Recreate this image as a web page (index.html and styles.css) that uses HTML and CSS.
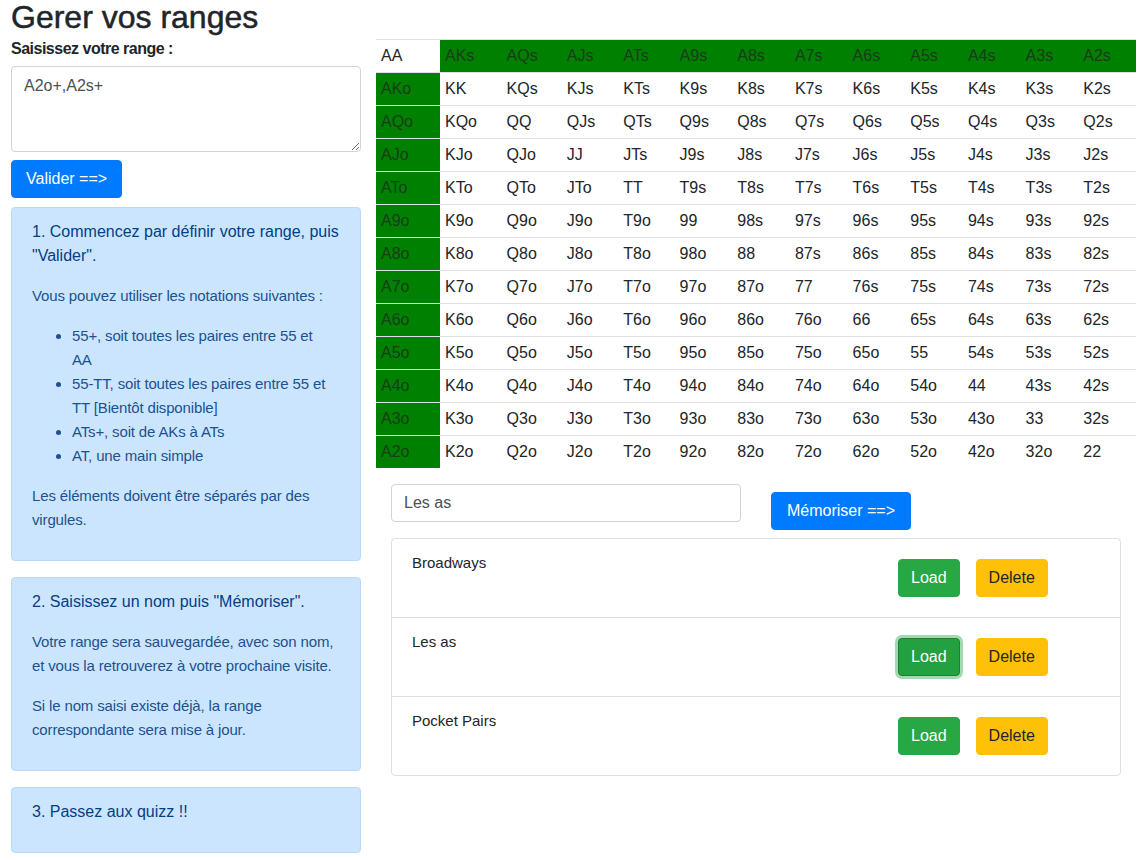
FILE: index.html
```html
<!DOCTYPE html>
<html lang="fr">
<head>
<meta charset="utf-8">
<title>Gerer vos ranges</title>
<link rel="stylesheet" href="styles.css">
</head>
<body>
<div class="page">
  <div class="left">
    <h2 class="title">Gerer vos ranges</h2>
    <label class="label" for="range">Saisissez votre range :</label>
    <textarea id="range" class="form-control" rows="3">A2o+,A2s+</textarea>
    <button class="btn btn-primary btn-valider">Valider ==&gt;</button>

    <div class="alert">
      <p class="strong">1. Commencez par définir votre range, puis "Valider".</p>
      <p>Vous pouvez utiliser les notations suivantes :</p>
      <ul>
        <li>55+, soit toutes les paires entre 55 et AA</li>
        <li>55-TT, soit toutes les paires entre 55 et TT [Bientôt disponible]</li>
        <li>ATs+, soit de AKs à ATs</li>
        <li>AT, une main simple</li>
      </ul>
      <p>Les éléments doivent être séparés par des virgules.</p>
    </div>
    <div class="alert">
      <p class="strong">2. Saisissez un nom puis "Mémoriser".</p>
      <p>Votre range sera sauvegardée, avec son nom, et vous la retrouverez à votre prochaine visite.</p>
      <p>Si le nom saisi existe déjà, la range correspondante sera mise à jour.</p>
    </div>
    <div class="alert">
      <p class="strong">3. Passez aux quizz !!</p>
    </div>
  </div>

  <div class="right">
    <table class="grid">
      <tbody>
        <tr><td>AA</td><td class="on">AKs</td><td class="on">AQs</td><td class="on">AJs</td><td class="on">ATs</td><td class="on">A9s</td><td class="on">A8s</td><td class="on">A7s</td><td class="on">A6s</td><td class="on">A5s</td><td class="on">A4s</td><td class="on">A3s</td><td class="on">A2s</td></tr>
        <tr><td class="on">AKo</td><td>KK</td><td>KQs</td><td>KJs</td><td>KTs</td><td>K9s</td><td>K8s</td><td>K7s</td><td>K6s</td><td>K5s</td><td>K4s</td><td>K3s</td><td>K2s</td></tr>
        <tr><td class="on">AQo</td><td>KQo</td><td>QQ</td><td>QJs</td><td>QTs</td><td>Q9s</td><td>Q8s</td><td>Q7s</td><td>Q6s</td><td>Q5s</td><td>Q4s</td><td>Q3s</td><td>Q2s</td></tr>
        <tr><td class="on">AJo</td><td>KJo</td><td>QJo</td><td>JJ</td><td>JTs</td><td>J9s</td><td>J8s</td><td>J7s</td><td>J6s</td><td>J5s</td><td>J4s</td><td>J3s</td><td>J2s</td></tr>
        <tr><td class="on">ATo</td><td>KTo</td><td>QTo</td><td>JTo</td><td>TT</td><td>T9s</td><td>T8s</td><td>T7s</td><td>T6s</td><td>T5s</td><td>T4s</td><td>T3s</td><td>T2s</td></tr>
        <tr><td class="on">A9o</td><td>K9o</td><td>Q9o</td><td>J9o</td><td>T9o</td><td>99</td><td>98s</td><td>97s</td><td>96s</td><td>95s</td><td>94s</td><td>93s</td><td>92s</td></tr>
        <tr><td class="on">A8o</td><td>K8o</td><td>Q8o</td><td>J8o</td><td>T8o</td><td>98o</td><td>88</td><td>87s</td><td>86s</td><td>85s</td><td>84s</td><td>83s</td><td>82s</td></tr>
        <tr><td class="on">A7o</td><td>K7o</td><td>Q7o</td><td>J7o</td><td>T7o</td><td>97o</td><td>87o</td><td>77</td><td>76s</td><td>75s</td><td>74s</td><td>73s</td><td>72s</td></tr>
        <tr><td class="on">A6o</td><td>K6o</td><td>Q6o</td><td>J6o</td><td>T6o</td><td>96o</td><td>86o</td><td>76o</td><td>66</td><td>65s</td><td>64s</td><td>63s</td><td>62s</td></tr>
        <tr><td class="on">A5o</td><td>K5o</td><td>Q5o</td><td>J5o</td><td>T5o</td><td>95o</td><td>85o</td><td>75o</td><td>65o</td><td>55</td><td>54s</td><td>53s</td><td>52s</td></tr>
        <tr><td class="on">A4o</td><td>K4o</td><td>Q4o</td><td>J4o</td><td>T4o</td><td>94o</td><td>84o</td><td>74o</td><td>64o</td><td>54o</td><td>44</td><td>43s</td><td>42s</td></tr>
        <tr><td class="on">A3o</td><td>K3o</td><td>Q3o</td><td>J3o</td><td>T3o</td><td>93o</td><td>83o</td><td>73o</td><td>63o</td><td>53o</td><td>43o</td><td>33</td><td>32s</td></tr>
        <tr><td class="on">A2o</td><td>K2o</td><td>Q2o</td><td>J2o</td><td>T2o</td><td>92o</td><td>82o</td><td>72o</td><td>62o</td><td>52o</td><td>42o</td><td>32o</td><td>22</td></tr>
      </tbody>
    </table>

    <div class="save-row">
      <div class="half"><input class="form-control" type="text" value="Les as"></div>
      <div class="half"><button class="btn btn-primary btn-save">Mémoriser ==&gt;</button></div>
    </div>

    <ul class="list-group">
      <li class="list-item">
        <div class="item-name">Broadways</div>
        <div class="item-actions"><button class="btn btn-success">Load</button><button class="btn btn-warning">Delete</button></div>
      </li>
      <li class="list-item">
        <div class="item-name">Les as</div>
        <div class="item-actions"><button class="btn btn-success focus">Load</button><button class="btn btn-warning">Delete</button></div>
      </li>
      <li class="list-item">
        <div class="item-name">Pocket Pairs</div>
        <div class="item-actions"><button class="btn btn-success">Load</button><button class="btn btn-warning">Delete</button></div>
      </li>
    </ul>
  </div>
</div>
</body>
</html>
```

FILE: styles.css
```css
* { box-sizing: border-box; }

html, body {
  margin: 0;
  padding: 0;
  background: #fff;
}

body {
  font-family: "Liberation Sans", Arial, sans-serif;
  font-size: 16px;
  line-height: 1.5;
  color: #212529;
}

.page {
  display: flex;
  gap: 15px;
  padding: 0 6px 0 11px;
  align-items: flex-start;
}

.left {
  width: 350px;
  flex: none;
  display: flex;
  flex-direction: column;
  align-items: flex-start;
}

.right {
  flex: 1;
  padding-top: 39px;
}

.title {
  margin: 0 0 3px;
  font-size: 32px;
  line-height: 34px;
  font-weight: 500;
  -webkit-text-stroke: 0.5px #212529;
  color: #212529;
}

.label {
  display: block;
  font-size: 16px;
  font-weight: 700;
  letter-spacing: -0.5px;
  line-height: 24px;
  margin-bottom: 5px;
}

.form-control {
  display: block;
  width: 100%;
  font-family: inherit;
  font-size: 16px;
  line-height: 24px;
  color: #495057;
  background: #fff;
  border: 1px solid #ced4da;
  border-radius: 4px;
  padding: 6px 12px;
  margin: 0;
}

textarea.form-control {
  height: 86px;
  resize: vertical;
  padding-top: 7px;
}

input.form-control {
  height: 38px;
}

.btn {
  display: inline-block;
  font-family: inherit;
  font-size: 16px;
  line-height: 24px;
  padding: 6px 12px;
  border: 1px solid transparent;
  border-radius: 4px;
  cursor: pointer;
  height: 38px;
}

.btn-primary {
  background: #007bff;
  border-color: #007bff;
  color: #fff;
}

.btn-success {
  background: #28a745;
  border-color: #28a745;
  color: #fff;
}

.btn-success.focus {
  background: #23a040;
  border-color: #1e7e34;
  box-shadow: 0 0 0 3px rgba(72, 180, 97, 0.5);
}

.btn-warning {
  background: #ffc107;
  border-color: #ffc107;
  color: #212529;
}

.btn-valider {
  margin: 8px 0 9px;
  padding: 6px 14px;
}

.alert {
  width: 100%;
  background: #cce5ff;
  border: 1px solid #b8daff;
  border-radius: 4px;
  color: #004085;
  padding: 12px 20px;
  margin-bottom: 16px;
}

.alert p {
  margin: 0 0 16px;
  font-size: 15px;
  line-height: 24px;
  letter-spacing: -0.15px;
  color: #1a5290;
}

.alert p.strong {
  font-size: 16px;
  letter-spacing: 0;
  color: #004085;
}

.alert ul {
  margin: 0 0 16px;
  padding: 0 6px 0 40px;
  font-size: 15px;
  line-height: 24px;
  letter-spacing: -0.15px;
  color: #1a5290;
}

.grid {
  width: 100%;
  border-collapse: collapse;
  margin-bottom: 16px;
}

.grid td {
  border-top: 1px solid #dee2e6;
  padding: 4px 5px;
  line-height: 24px;
  text-align: left;
  vertical-align: top;
  white-space: nowrap;
}

.grid td:first-child {
  width: 64px;
}

.grid td.on {
  background: #008000;
  color: #183d18;
}

.save-row {
  display: flex;
}

.half {
  width: 50%;
  padding: 0 15px;
}

.btn-save {
  margin: 8px 0;
  padding: 6px 15px;
}

.list-group {
  list-style: none;
  margin: 0 15px;
  padding: 0;
  border: 1px solid rgba(0, 0, 0, 0.125);
  border-radius: 4px;
}

.list-item {
  display: flex;
  padding: 12px 5px;
  border-top: 1px solid rgba(0, 0, 0, 0.125);
}

.list-item:first-child {
  border-top: none;
}

.item-name {
  width: 478px;
  padding: 0 15px;
  font-size: 15px;
  line-height: 24px;
}

.item-actions {
  padding: 0 15px;
  display: flex;
}

.item-actions .btn {
  margin: 8px;
}
```
